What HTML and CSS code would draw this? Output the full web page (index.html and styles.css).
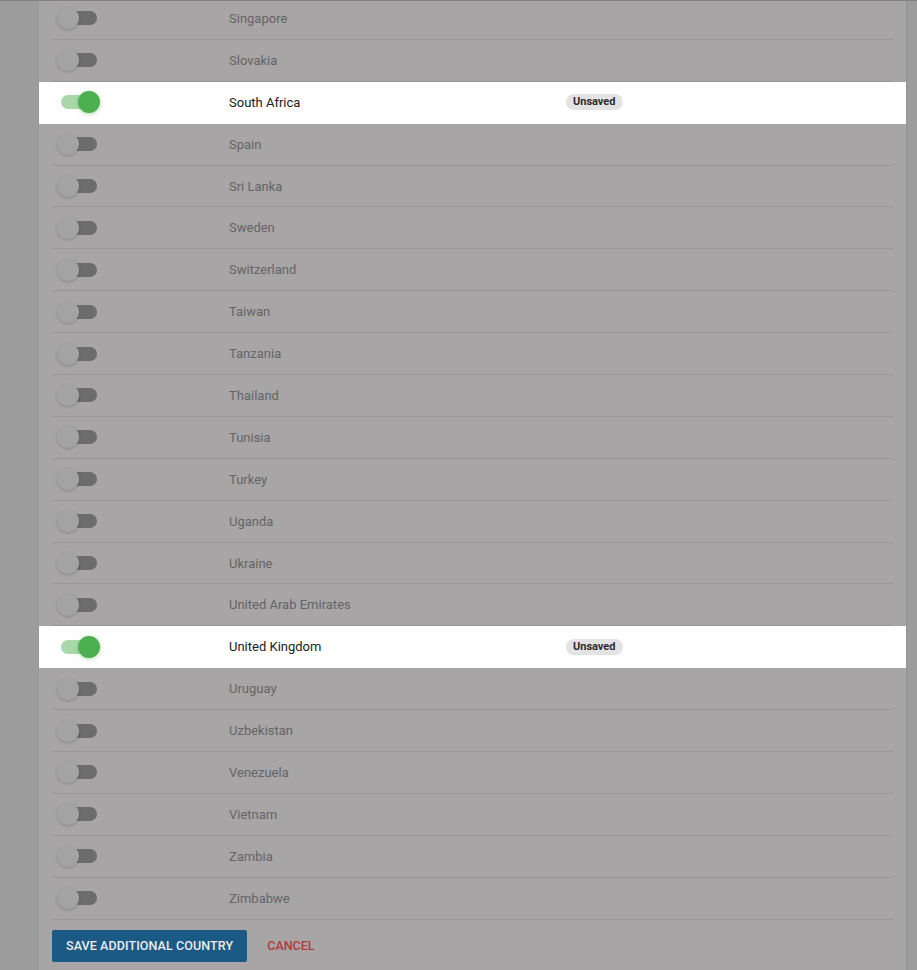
FILE: index.html
```html
<!DOCTYPE html>
<html lang="en">
<head>
  <meta charset="UTF-8" />
  <title>Additional Countries</title>
  <link rel="stylesheet" href="styles.css">
</head>
<body>
  <div class="page">
    <div class="card">
      <ul class="country-list">
        <li class="row"><div class="row-inner"><span class="toggle"><span class="track"></span><span class="thumb"></span></span><span class="name">Singapore</span></div></li>
        <li class="row"><div class="row-inner"><span class="toggle"><span class="track"></span><span class="thumb"></span></span><span class="name">Slovakia</span></div></li>
        <li class="row active"><div class="row-inner"><span class="toggle on"><span class="track"></span><span class="thumb"></span></span><span class="name">South Africa</span><span class="badge">Unsaved</span></div></li>
        <li class="row"><div class="row-inner"><span class="toggle"><span class="track"></span><span class="thumb"></span></span><span class="name">Spain</span></div></li>
        <li class="row"><div class="row-inner"><span class="toggle"><span class="track"></span><span class="thumb"></span></span><span class="name">Sri Lanka</span></div></li>
        <li class="row"><div class="row-inner"><span class="toggle"><span class="track"></span><span class="thumb"></span></span><span class="name">Sweden</span></div></li>
        <li class="row"><div class="row-inner"><span class="toggle"><span class="track"></span><span class="thumb"></span></span><span class="name">Switzerland</span></div></li>
        <li class="row"><div class="row-inner"><span class="toggle"><span class="track"></span><span class="thumb"></span></span><span class="name">Taiwan</span></div></li>
        <li class="row"><div class="row-inner"><span class="toggle"><span class="track"></span><span class="thumb"></span></span><span class="name">Tanzania</span></div></li>
        <li class="row"><div class="row-inner"><span class="toggle"><span class="track"></span><span class="thumb"></span></span><span class="name">Thailand</span></div></li>
        <li class="row"><div class="row-inner"><span class="toggle"><span class="track"></span><span class="thumb"></span></span><span class="name">Tunisia</span></div></li>
        <li class="row"><div class="row-inner"><span class="toggle"><span class="track"></span><span class="thumb"></span></span><span class="name">Turkey</span></div></li>
        <li class="row"><div class="row-inner"><span class="toggle"><span class="track"></span><span class="thumb"></span></span><span class="name">Uganda</span></div></li>
        <li class="row"><div class="row-inner"><span class="toggle"><span class="track"></span><span class="thumb"></span></span><span class="name">Ukraine</span></div></li>
        <li class="row"><div class="row-inner"><span class="toggle"><span class="track"></span><span class="thumb"></span></span><span class="name">United Arab Emirates</span></div></li>
        <li class="row active"><div class="row-inner"><span class="toggle on"><span class="track"></span><span class="thumb"></span></span><span class="name">United Kingdom</span><span class="badge">Unsaved</span></div></li>
        <li class="row"><div class="row-inner"><span class="toggle"><span class="track"></span><span class="thumb"></span></span><span class="name">Uruguay</span></div></li>
        <li class="row"><div class="row-inner"><span class="toggle"><span class="track"></span><span class="thumb"></span></span><span class="name">Uzbekistan</span></div></li>
        <li class="row"><div class="row-inner"><span class="toggle"><span class="track"></span><span class="thumb"></span></span><span class="name">Venezuela</span></div></li>
        <li class="row"><div class="row-inner"><span class="toggle"><span class="track"></span><span class="thumb"></span></span><span class="name">Vietnam</span></div></li>
        <li class="row"><div class="row-inner"><span class="toggle"><span class="track"></span><span class="thumb"></span></span><span class="name">Zambia</span></div></li>
        <li class="row"><div class="row-inner"><span class="toggle"><span class="track"></span><span class="thumb"></span></span><span class="name">Zimbabwe</span></div></li>
      </ul>

      <div class="actions">
        <button class="btn-save">Save Additional Country</button>
        <button class="btn-cancel">Cancel</button>
      </div>
    </div>
  </div>
</body>
</html>
```

FILE: styles.css
```css
html, body {
  margin: 0;
  height: 100%;
  overflow: hidden;
}

body {
  font-family: Roboto, 'Liberation Sans', sans-serif;
  background: #9d9c9d;
  border-top: 1px solid #7f8384;
  box-sizing: border-box;
}

.page {
  display: flex;
  height: 100%;
  padding-left: 38px;
  padding-right: 10px;
}

.card {
  flex: 1;
  background: #a7a5a6;
  border-left: 1px solid #999899;
  border-right: 1px solid #949394;
}

.country-list {
  list-style: none;
  margin: -3px 0 0;
  padding: 0;
}

.row {
  height: 41.9px;
}

.row-inner {
  display: flex;
  align-items: center;
  height: 100%;
  box-sizing: border-box;
  margin: 0 13px;
  border-bottom: 1px solid #979697;
}

.row.active {
  background: #ffffff;
}

.row.active .row-inner {
  border-bottom-color: #ffffff;
}

/* switch */
.toggle {
  position: relative;
  width: 43px;
  height: 22px;
  margin-left: 5px;
  flex: none;
}

.track {
  position: absolute;
  left: 4px;
  top: 4px;
  width: 36px;
  height: 14px;
  border-radius: 7px;
  background: #6d6c6d;
}

.thumb {
  position: absolute;
  left: 0;
  top: 0;
  width: 22px;
  height: 22px;
  border-radius: 50%;
  background: #a4a3a4;
  box-shadow: 0 1px 3px rgba(0, 0, 0, 0.18);
}

.toggle.on .track {
  background: #a9d8aa;
}

.toggle.on .thumb {
  left: 21px;
  background: #4caf50;
  box-shadow: 0 1px 4px rgba(76, 175, 80, 0.45);
}

.name {
  margin-left: 129px;
  width: 337px;
  font-size: 13px;
  color: #656465;
}

.row.active .name {
  color: #212121;
}

.badge {
  display: inline-block;
  padding: 1px 7px;
  border-radius: 8px;
  background: #e3e3e3;
  color: #2b2b2b;
  font-size: 11px;
  font-weight: 700;
  line-height: 14px;
}

.actions {
  display: flex;
  align-items: center;
  gap: 20px;
  padding: 10px 13px;
}

.btn-save {
  height: 32px;
  padding: 0 14px;
  border: none;
  border-radius: 2px;
  background: #1c5a86;
  color: #ececec;
  font-family: inherit;
  font-size: 12.5px;
  font-weight: 500;
  text-transform: uppercase;
  letter-spacing: 0.1px;
}

.btn-cancel {
  padding: 0;
  border: none;
  background: none;
  color: #b23a3b;
  font-family: inherit;
  font-size: 12.5px;
  font-weight: 500;
  text-transform: uppercase;
}
```
